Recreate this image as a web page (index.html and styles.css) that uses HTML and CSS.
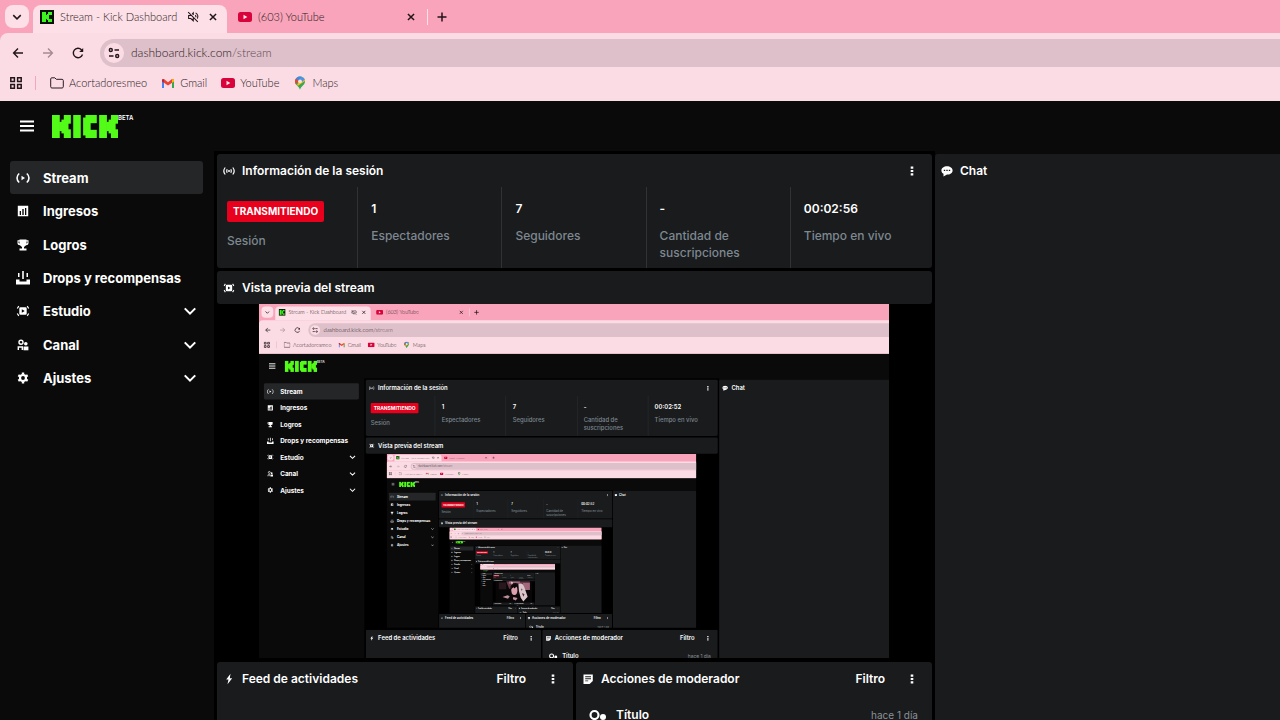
FILE: index.html
```html
<!DOCTYPE html>
<html lang="es">
<head>
<meta charset="utf-8">
<meta name="viewport" content="width=device-width, initial-scale=1">
<title>Stream - Kick Dashboard</title>
<link rel="stylesheet" href="styles.css">
</head>
<body>
<svg class="sprite" aria-hidden="true">
  <symbol id="chevron" viewBox="0 0 16 16"><path d="M2 5l6 6 6-6" fill="none" stroke="currentColor" stroke-width="2.4"/></symbol>
  <symbol id="close" viewBox="0 0 16 16"><path d="M4.500 4.500l7 7M11.500 4.500l-7 7" fill="none" stroke="currentColor" stroke-width="1.700"/></symbol>
  <symbol id="plus" viewBox="0 0 16 16"><path d="M8 3.500v9M3.500 8h9" fill="none" stroke="currentColor" stroke-width="1.500"/></symbol>
  <symbol id="muted" viewBox="0 0 16 16"><path d="M2.500 2.500l11 11M6 6.200H3v3.600h2.500L8.300 12.300V9M7 4.600l1.300-1.300v2.500M10.500 6c.8.700 1 1.500.9 2.300M11 3.300c2.200 1.300 3 4 2 6.500" fill="none" stroke="currentColor" stroke-width="1.200"/></symbol>
  <symbol id="favicon" viewBox="0 0 14 14"><rect width="14" height="14" fill="#071007"/><g fill="#3df51e"><rect x="2" y="2" width="4" height="10"/><rect x="6" y="5" width="2" height="4"/><rect x="7" y="4" width="2" height="6"/><rect x="8" y="2" width="4" height="3"/><rect x="8" y="9" width="4" height="3"/></g></symbol>
  <symbol id="youtube" viewBox="0 0 14 10"><rect width="14" height="10" rx="2.500" fill="#d9033b"/><path d="M5.500 2.800v4.400L9.300 5z" fill="#fde5ec"/></symbol>
  <symbol id="arrow" viewBox="0 0 16 16"><path d="M13 8H3.800M8 3.600L3.600 8 8 12.400" fill="none" stroke="currentColor" stroke-width="1.400"/></symbol>
  <symbol id="reload" viewBox="0 0 16 16"><path d="M12.500 9.500A4.700 4.700 0 1 1 11.400 4.700L12.800 6" fill="none" stroke="currentColor" stroke-width="1.400"/><path d="M13.200 3v4H9.200z" fill="currentColor"/></symbol>
  <symbol id="tune" viewBox="0 0 16 16"><g fill="none" stroke="currentColor" stroke-width="1.400"><circle cx="4.800" cy="5" r="1.500"/><path d="M8.500 5H13M3 11H7.500"/><circle cx="11.200" cy="11" r="1.500"/></g></symbol>
  <symbol id="apps" viewBox="0 0 14 14"><path d="M1.800 1.800h3.600v3.600H1.800zM8.600 1.800h3.600v3.600H8.600zM1.800 8.600h3.600v3.600H1.800zM8.600 8.600h3.600v3.600H8.600z" fill="none" stroke="currentColor" stroke-width="1.500"/></symbol>
  <symbol id="folder" viewBox="0 0 14 12"><path d="M.7 2c0-.7.400-1.200 1.100-1.200h3L6.300 2.300h5.800c.7 0 1.200.5 1.200 1.200v6.300c0 .7-.5 1.200-1.200 1.200H1.900C1.200 11 .7 10.500.7 9.800z" fill="none" stroke="currentColor"/></symbol>
  <symbol id="gmail" viewBox="0 0 14 10"><path d="M1 2.200V10h2V4.500z" fill="#4285f4"/><path d="M13 2.200V10h-2V4.500z" fill="#34a853"/><path d="M1 1.500L3 1l4 3.300L11 1l2 .5v2L7 7.500 1 3.500z" fill="#ea4335"/><path d="M11 1.200l2 .3v2l-2 1.300z" fill="#fbbc04"/><path d="M1 1.500l2-.3v3.600L1 3.500z" fill="#b5263a"/></symbol>
  <symbol id="maps" viewBox="0 0 12 14"><path d="M6 .5a5 5 0 0 1 5 5c0 3.500-4 4.500-5 8.200C5 10 1 9 1 5.500a5 5 0 0 1 5-5z" fill="#34a853"/><path d="M1.900 2.500A5 5 0 0 1 7.500.7L4 5z" fill="#4285f4"/><path d="M1.900 2.500L4.300 4.700 2 8.400C.7 6.500.6 4.300 1.900 2.500z" fill="#ea4335"/><path d="M7.500.7c2 .5 3.300 2 3.500 4.200L4 9.800 3 9z" fill="#fbbc04"/><path d="M7.500.7c1.500.4 2.700 1.400 3.200 2.800L8 6 5.500 3z" fill="#4d94ee"/><circle cx="6" cy="5.300" r="1.900" fill="#fbdce5"/></symbol>
  <symbol id="menu" viewBox="0 0 14 12"><path d="M0 1.500h14M0 6h14M0 10.500h14" stroke="currentColor" stroke-width="1.900"/></symbol>
  <symbol id="logo" viewBox="0 0 28 9" preserveAspectRatio="none"><g fill="#53fc18"><rect width="3.300" height="9"/><rect x="3" y="2.700" width="2" height="3.600"/><rect x="4" y="1.800" width="3" height="5.400"/><rect x="5" width="3" height="3.400"/><rect x="5" y="5.600" width="3" height="3.400"/><rect x="9" width="3.200" height="9"/><rect x="13.200" y="1" width="3.200" height="7"/><rect x="14.200" width="4.800" height="3.200"/><rect x="14.200" y="5.800" width="4.800" height="3.200"/><rect x="20" width="3.300" height="9"/><rect x="23" y="2.700" width="2" height="3.600"/><rect x="24" y="1.800" width="3" height="5.400"/><rect x="25" width="3" height="3.400"/><rect x="25" y="5.600" width="3" height="3.400"/></g></symbol>
  <symbol id="stream" viewBox="0 0 14 14"><path d="M3.200 2.500C.3 5 .3 9 3.200 11.500M10.800 2.500c2.900 2.500 2.900 6.500 0 9" fill="none" stroke="currentColor" stroke-width="1.600"/><path d="M5.500 4.800v4.400L9 7z" fill="currentColor"/></symbol>
  <symbol id="income" viewBox="0 0 14 14"><path fill-rule="evenodd" d="M1.800 1.800h10.400v10.400H1.800zM3.700 7v4H5V7zM6.300 5v6h1.400V5zM9 4v7h1.300V4z" fill="currentColor"/></symbol>
  <symbol id="trophy" viewBox="0 0 14 14"><path fill-rule="evenodd" d="M3.500 1.500h7v.8h2v2.700c0 1.500-1 2.100-2.400 2.300L8 9v1.600h2.500v2h-7v-2H6V9L3.900 7.300C2.500 7.100 1.500 6.500 1.500 5V2.300h2zM2.500 3.400v1.400l1 1V3.400zM10.500 3.400v2.400l1-1V3.400z" fill="currentColor"/></symbol>
  <symbol id="drops" viewBox="0 0 14 14"><path d="M0 8.500h3.500v2h7v-2H14v5H0zM6.200 0h1.600v8H6.200zM2 2h1.500v4H2zM10.500 2H12v4h-1.500z" fill="currentColor"/></symbol>
  <symbol id="studio" viewBox="0 0 14 14"><path fill-rule="evenodd" d="M4.500 3.300h5q1.200 0 1.200 1.200v5q0 1.200-1.200 1.200h-5q-1.200 0-1.200-1.200v-5q0-1.200 1.200-1.200zM5.800 5.300v3.400L8.700 7z" fill="currentColor"/><path d="M1.300 4.500L2.800 2.200M11.200 2.200l1.500 2.300M12.700 9.500l-1.500 2.300M2.800 11.800L1.300 9.500" fill="none" stroke="currentColor" stroke-width="1.200"/></symbol>
  <symbol id="channel" viewBox="0 0 14 14"><circle cx="5" cy="4.200" r="2" fill="none" stroke="currentColor" stroke-width="1.400"/><path d="M2.300 12V9h4v3" fill="none" stroke="currentColor" stroke-width="1.400"/><circle cx="9.800" cy="5.800" r="1.800" fill="currentColor"/><path d="M7.500 8.500h4.900v3.800H7.500z" fill="currentColor"/></symbol>
  <symbol id="settings" viewBox="0 0 14 14"><circle cx="7" cy="7" r="3" fill="none" stroke="currentColor" stroke-width="2.200"/><path d="M7 1.500v2M7 10.500v2M2.300 4.300l1.700 1M10 8.700l1.700 1M2.300 9.700l1.700-1M10 5.300l1.700-1" stroke="currentColor" stroke-width="2.400"/></symbol>
  <symbol id="live" viewBox="0 0 12 10"><path d="M2.200 1.500C.6 3.500.6 6.500 2.200 8.500M9.800 1.500c1.600 2 1.600 5 0 7M4.200 3.200c-.6 1.200-.6 2.400 0 3.600M7.800 3.200c.6 1.200.6 2.400 0 3.600" fill="none" stroke="currentColor" stroke-width="1.200"/><circle cx="6" cy="5" r="1" fill="currentColor"/></symbol>
  <symbol id="dots" viewBox="0 0 4 12"><path d="M.7 1.500h2.600v2.200H.7zM.7 4.900h2.600v2.200H.7zM.7 8.300h2.600v2.200H.7z" fill="currentColor"/></symbol>
  <symbol id="chat" viewBox="0 0 12 12"><path fill-rule="evenodd" d="M6 1.200c3 0 5.600 1.700 5.600 4.200S9 9.600 6 9.600L2.500 11.400V8.800C1.200 8 .4 6.800.4 5.400.4 2.900 3 1.200 6 1.200zM2.800 4.700V6h1.400V4.700zM5.300 4.700V6h1.400V4.700zM7.800 4.700V6h1.400V4.700z" fill="currentColor"/></symbol>
  <symbol id="bolt" viewBox="0 0 12 12"><path d="M7.500.8L3.200 6.500h2.300L4.500 11.200l4.700-6H6.800z" fill="currentColor"/></symbol>
  <symbol id="note" viewBox="0 0 12 12"><path fill-rule="evenodd" d="M1.500 1.500h9.300v6.500L7.600 11H1.500zM3.200 3.300v.9h5.800v-.9zM3.200 5.300v.9h5.800v-.9zM3.200 7.400v.9h3v-.9z" fill="currentColor"/></symbol>
  <symbol id="key" viewBox="0 0 18 12"><circle cx="5.500" cy="6" r="4" fill="none" stroke="currentColor" stroke-width="2.200"/><circle cx="14" cy="8" r="3" fill="currentColor"/></symbol>
</svg>

<div class="screen">
  <header class="browser">
    <div class="tabs">
      <button class="tab-search" aria-label="Buscar pestañas"><svg class="i10"><use href="#chevron"/></svg></button>
      <div class="tab tab-active">
        <svg class="i14"><use href="#favicon"/></svg><span class="tab-title">Stream - Kick Dashboard</span>
        <button class="icon" aria-label="Activar sonido"><svg class="i14"><use href="#muted"/></svg></button>
        <button class="icon" aria-label="Cerrar Stream"><svg class="i14"><use href="#close"/></svg></button>
      </div>
      <div class="tab tab-idle">
        <svg class="yt"><use href="#youtube"/></svg><span class="tab-title">(603) YouTube</span>
        <button class="icon" aria-label="Cerrar YouTube"><svg class="i14"><use href="#close"/></svg></button>
      </div>
      <button class="icon new-tab" aria-label="Nueva pestaña"><svg class="i16"><use href="#plus"/></svg></button>
    </div>
    <div class="toolbar">
      <button class="icon" aria-label="Atrás"><svg class="i16"><use href="#arrow"/></svg></button>
      <button class="icon forward" aria-label="Adelante"><svg class="i16"><use href="#arrow"/></svg></button>
      <button class="icon" aria-label="Recargar"><svg class="i16"><use href="#reload"/></svg></button>
      <div class="omnibox">
        <button class="site" aria-label="Información del sitio"><svg class="i16"><use href="#tune"/></svg></button>
        <div class="url" role="textbox" tabindex="0" aria-label="Dirección">dashboard.kick.com<span class="path">/stream</span></div>
      </div>
    </div>
    <nav class="bookmarks" aria-label="Marcadores">
      <button class="icon apps" aria-label="Aplicaciones"><svg class="i14"><use href="#apps"/></svg></button>
      <a href="#"><svg class="i14"><use href="#folder"/></svg>Acortadoresmeo</a>
      <a href="#"><svg class="i14"><use href="#gmail"/></svg>Gmail</a>
      <a href="#"><svg class="yt"><use href="#youtube"/></svg>YouTube</a>
      <a href="#"><svg class="i14"><use href="#maps"/></svg>Maps</a>
    </nav>
  </header>

  <div class="topbar">
    <button class="icon" aria-label="Menú"><svg class="i14"><use href="#menu"/></svg></button>
    <a class="brand" href="#" aria-label="Kick"><svg class="logo"><use href="#logo"/></svg><span class="beta">BETA</span></a>
  </div>

  <div class="body">
    <nav class="sidebar" aria-label="Panel">
      <a class="item item-active" href="#"><svg class="i14"><use href="#stream"/></svg><span class="label">Stream</span></a>
      <a class="item" href="#"><svg class="i14"><use href="#income"/></svg><span class="label">Ingresos</span></a>
      <a class="item" href="#"><svg class="i14"><use href="#trophy"/></svg><span class="label">Logros</span></a>
      <a class="item" href="#"><svg class="i14"><use href="#drops"/></svg><span class="label">Drops y recompensas</span></a>
      <button class="item"><svg class="i14"><use href="#studio"/></svg><span class="label">Estudio</span><svg class="i14"><use href="#chevron"/></svg></button>
      <button class="item"><svg class="i14"><use href="#channel"/></svg><span class="label">Canal</span><svg class="i14"><use href="#chevron"/></svg></button>
      <button class="item"><svg class="i14"><use href="#settings"/></svg><span class="label">Ajustes</span><svg class="i14"><use href="#chevron"/></svg></button>
    </nav>

    <main class="center">
      <section class="panel">
        <div class="head"><svg class="i12"><use href="#live"/></svg><h2>Información de la sesión</h2><button class="icon" aria-label="Más opciones"><svg class="i12"><use href="#dots"/></svg></button></div>
        <dl class="stats">
          <div class="stat"><dd><span class="badge">TRANSMITIENDO</span></dd><dt>Sesión</dt></div>
          <div class="stat"><dd>1</dd><dt>Espectadores</dt></div>
          <div class="stat"><dd>7</dd><dt>Seguidores</dt></div>
          <div class="stat"><dd>-</dd><dt>Cantidad de suscripciones</dt></div>
          <div class="stat"><dd class="uptime">00:02:56</dd><dt>Tiempo en vivo</dt></div>
        </dl>
      </section>
      <section class="preview">
        <div class="head panel"><svg class="i12"><use href="#studio"/></svg><h2>Vista previa del stream</h2></div>
        <div class="stage">
          <svg class="video" viewBox="0 0 1280 720" role="img" aria-label="Señal en directo">
            <rect width="1280" height="720" fill="#080607"/>
            <path d="M380 0h820v260H480z" fill="#6b3a49"/>
            <path d="M120 40h260v230H120z" fill="#27181d"/>
            <path d="M470 0h380v80H470zM960 60h240v240h-240z" fill="#a0687b"/>
            <path d="M300 720l130-290 230-70 290 360z" fill="#0b0709"/>
            <path d="M520 250q0-190 180-190t200 210l-40 190H540z" fill="#150d11"/>
            <ellipse cx="660" cy="310" rx="105" ry="165" fill="#dca0ae"/>
            <path d="M540 270q30-160 130-160t150 150l-90-80-60 70-40-50z" fill="#0d070a"/>
            <path d="M530 0l90 40-50 90zM800 90q140-60 200 100l120 340-150 170-90-130-60-230z" fill="#dac5ca"/>
            <path d="M890 250l50 20-20 60zM920 410l90 30-30 90z" fill="#49323b"/>
            <path d="M250 540l170-60 80 40-60 80zM620 540l150 40-60 80-100-40z" fill="#bd8f9d"/>
            <path d="M1200 0h80v720h-80z" fill="#090607"/>
          </svg>
        </div>
      </section>
      <div class="bottom">
        <section class="panel">
          <div class="head"><svg class="i12"><use href="#bolt"/></svg><h2>Feed de actividades</h2><button class="filter">Filtro</button><button class="icon" aria-label="Más opciones"><svg class="i12"><use href="#dots"/></svg></button></div>
        </section>
        <section class="panel">
          <div class="head"><svg class="i12"><use href="#note"/></svg><h2>Acciones de moderador</h2><button class="filter">Filtro</button><button class="icon" aria-label="Más opciones"><svg class="i12"><use href="#dots"/></svg></button></div>
          <div class="action"><svg class="key"><use href="#key"/></svg><span class="action-name">Título</span><time>hace 1 día</time></div>
        </section>
      </div>
    </main>

    <aside class="panel chat">
      <div class="head"><svg class="i12"><use href="#chat"/></svg><h2>Chat</h2></div>
    </aside>
  </div>
</div>
<script src="script.js"></script>
</body>
</html>
```
FILE: styles.css
```css
* { box-sizing: border-box; }
html, body { height: 100%; }
body { margin: 0; overflow: hidden; background: #000; }
h2, dl, dd { margin: 0; }
button { border: 0; padding: 0; background: none; color: inherit; font: inherit; cursor: pointer; }
a { color: inherit; text-decoration: none; }
svg { display: block; flex: none; }
.sprite { display: none; }

.screen {
  display: flex; flex-direction: column; height: 100%; overflow: hidden;
  background: #0a0a0a; color: #fff;
  font: 600 12px/16px Inter, "Liberation Sans", sans-serif;
}
.icon { display: grid; place-items: center; flex: none; }
.i10 { width: 10px; height: 10px; }
.i12 { width: 12px; height: 12px; }
.i14 { width: 14px; height: 14px; }
.i16 { width: 16px; height: 16px; }
.yt { width: 14px; height: 10px; }

.browser { flex: none; background: #f9a4ba; color: #2b1a21; font: 300 11px/16px Lato, "Open Sans", sans-serif; }
.browser .icon { color: #22151a; }
.tabs { display: flex; align-items: flex-end; height: 33px; padding-left: 5px; }
.tab-search { display: grid; place-items: center; width: 24px; height: 23px; margin: 0 4px 5px 0; border-radius: 8px; background: #fddfe7; color: #22151a; }
.tab { display: flex; align-items: center; width: 194px; height: 28px; padding: 0 7px 4px; }
.tab-active { background: #fddfe7; border-radius: 8px 8px 0 0; }
.tab-idle { width: 198px; padding-left: 11px; }
.tab .icon { margin-left: 6px; }
.tab-title { flex: 1; margin-left: 6px; white-space: nowrap; }
.new-tab { height: 16px; margin: 0 0 8px 2px; padding-left: 6px; border-left: 1px solid #fddfe7; }
.toolbar { display: flex; align-items: center; gap: 14px; height: 38px; padding: 2px 0 0 10px; background: #fbdce5; border-top-left-radius: 8px; }
.browser .forward { color: #a58a94; }
.forward svg { transform: rotate(180deg); }
.omnibox { display: flex; align-items: center; flex: 1; height: 28px; padding-left: 4px; border-radius: 14px 0 0 14px; background: #dec0ca; }
.site { display: grid; place-items: center; width: 20px; height: 20px; border-radius: 10px; background: #fbdce5; color: #22151a; }
.url { margin-left: 7px; font-size: 12px; line-height: 20px; }
.path { color: #5f4a53; }
.bookmarks { display: flex; align-items: center; gap: 14px; height: 30px; padding: 0 0 6px 9px; background: #fbdce5; }
.bookmarks a { display: flex; align-items: center; gap: 5px; }
.apps { height: 14px; padding-right: 12px; border-right: 1px solid #f0a9bc; }

.topbar { display: flex; align-items: center; flex: none; gap: 18px; height: 50px; padding-left: 20px; }
.brand { display: flex; }
.logo { width: 66px; height: 23px; }
.beta { font-size: 6px; line-height: 6px; }

.body { display: flex; flex: 1; min-height: 0; }
.sidebar { display: grid; grid-auto-rows: 1fr; flex: none; width: 214px; height: 252px; padding: 10px 11px 8px 10px; font-size: 13px; font-weight: 700; }
.item { display: flex; align-items: center; gap: 13px; padding: 0 6px; border-radius: 3px; text-align: left; }
.item-active { background: #242628; }
.label { flex: 1; }
.center { display: flex; flex-direction: column; gap: 3px; flex: 715 1 0; min-width: 0; padding: 3px 3px 0; background: #000; }
.panel { min-width: 0; border-radius: 3px; background: #191b1d; }
.head { display: flex; align-items: center; gap: 7px; height: 33px; padding: 0 14px 0 6px; }
.head h2 { flex: 1; font: inherit; }
.stats { display: grid; grid-template-columns: 140fr repeat(3, 144fr) 142fr; min-height: 81px; }
.stat { display: flex; flex-direction: column; padding: 14px 10px 0 13px; border-left: 1px solid #2f3336; }
.stat:first-child { padding-left: 10px; border-left: 0; }
.stat dd { margin-bottom: 10px; }
.stat dt { color: #7e8890; font-weight: 500; line-height: 17px; }
.badge { display: inline-block; padding: 3px 6px; border-radius: 2px; background: #e8001c; font-size: 10px; font-weight: 700; line-height: 15px; }
.stage { padding: 0 43px 1px 42px; }
.video { width: 100%; height: auto; overflow: hidden; }
.bottom { display: grid; grid-template-columns: 1fr 1fr; gap: 3px; flex: 1; min-height: 0; overflow: hidden; }
.filter { margin-right: 14px; }
.action { display: flex; align-items: center; gap: 9px; padding: 12px 14px 0 13px; }
.action-name { flex: 1; }
.action time { color: #8a9298; font-size: 10px; font-weight: 400; }
.key { width: 18px; height: 12px; }
.chat { flex: 345 1 0; margin-top: 3px; border-radius: 3px 0 0 0; }
```
FILE: script.js
```js
// The stream captures its own dashboard, so every preview holds the previous frame.
const SVG_NS = 'http://www.w3.org/2000/svg';
const DEPTH = 4;
const screenEl = document.querySelector('.screen');
const blank = screenEl.cloneNode(true);
blank.querySelector('.uptime').textContent = '00:02:52';

let frame = null;
for (let i = 0; i < DEPTH; i++) {
  const copy = blank.cloneNode(true);
  copy.inert = true;
  if (frame) copy.querySelector('.video').replaceChildren(frame);
  frame = document.createElementNS(SVG_NS, 'foreignObject');
  frame.setAttribute('width', '1280');
  frame.setAttribute('height', '720');
  frame.append(copy);
}
screenEl.querySelector('.video').replaceChildren(frame);
```
